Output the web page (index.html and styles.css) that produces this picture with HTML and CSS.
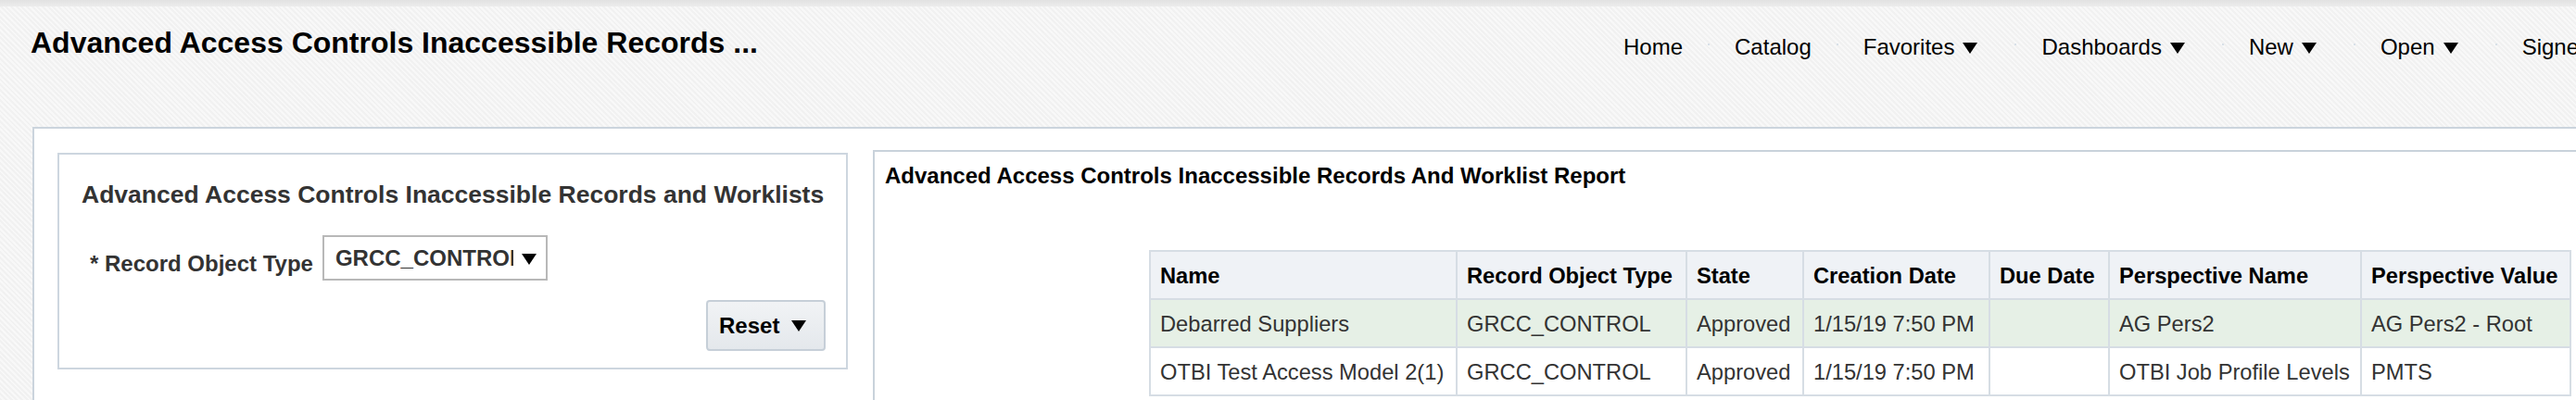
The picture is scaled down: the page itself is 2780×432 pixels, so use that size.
FILE: index.html
```html
<!DOCTYPE html>
<html lang="en">
<head>
  <meta charset="UTF-8" />
  <meta name="viewport" content="width=device-width, initial-scale=1.0" />
  <title>Advanced Access Controls Inaccessible Records</title>
  <link rel="stylesheet" href="styles.css">
</head>
<body>
  <div class="top-strip"></div>

  <header class="page-header">
    <h1 class="page-title">Advanced Access Controls Inaccessible Records ...</h1>
    <nav class="global-nav">
      <a class="nav-item">Home</a>
      <span class="nav-sep"></span>
      <a class="nav-item">Catalog</a>
      <span class="nav-sep"></span>
      <a class="nav-item has-menu">Favorites <svg class="caret" viewBox="0 0 16 12"><path d="M0 0H16L8 12Z"/></svg></a>
      <span class="nav-sep"></span>
      <a class="nav-item has-menu">Dashboards <svg class="caret" viewBox="0 0 16 12"><path d="M0 0H16L8 12Z"/></svg></a>
      <span class="nav-sep"></span>
      <a class="nav-item has-menu">New <svg class="caret" viewBox="0 0 16 12"><path d="M0 0H16L8 12Z"/></svg></a>
      <span class="nav-sep"></span>
      <a class="nav-item has-menu">Open <svg class="caret" viewBox="0 0 16 12"><path d="M0 0H16L8 12Z"/></svg></a>
      <span class="nav-sep"></span>
      <a class="nav-item">Signed In As grcuser</a>
    </nav>
  </header>

  <main class="dashboard">
    <div class="dashboard-panel">

      <section class="prompt-box">
        <h2 class="prompt-title">Advanced Access Controls Inaccessible Records and Worklists</h2>
        <div class="prompt-row">
          <label class="prompt-label">* Record Object Type</label>
          <div class="select-box">
            <span class="select-value">GRCC_CONTROL</span>
            <svg class="caret" viewBox="0 0 16 12"><path d="M0 0H16L8 12Z"/></svg>
          </div>
        </div>
        <div class="prompt-actions">
          <button class="reset-button">Reset <svg class="caret" viewBox="0 0 16 12"><path d="M0 0H16L8 12Z"/></svg></button>
        </div>
      </section>

      <section class="report">
        <h3 class="report-title">Advanced Access Controls Inaccessible Records And Worklist Report</h3>
        <table class="report-table">
          <colgroup>
            <col class="col-name">
            <col class="col-type">
            <col class="col-state">
            <col class="col-created">
            <col class="col-due">
            <col class="col-pname">
            <col class="col-pvalue">
          </colgroup>
          <thead>
            <tr>
              <th>Name</th>
              <th>Record Object Type</th>
              <th>State</th>
              <th>Creation Date</th>
              <th>Due Date</th>
              <th>Perspective Name</th>
              <th>Perspective Value</th>
            </tr>
          </thead>
          <tbody>
            <tr class="highlight">
              <td>Debarred Suppliers</td>
              <td>GRCC_CONTROL</td>
              <td>Approved</td>
              <td>1/15/19 7:50 PM</td>
              <td></td>
              <td>AG Pers2</td>
              <td>AG Pers2 - Root</td>
            </tr>
            <tr>
              <td>OTBI Test Access Model 2(1)</td>
              <td>GRCC_CONTROL</td>
              <td>Approved</td>
              <td>1/15/19 7:50 PM</td>
              <td></td>
              <td>OTBI Job Profile Levels</td>
              <td>PMTS</td>
            </tr>
          </tbody>
        </table>
      </section>

    </div>
  </main>
</body>
</html>
```

FILE: styles.css
```css
body {
  margin: 0;
  height: 432px;
  overflow: hidden;
  font-family: "Liberation Sans", Arial, sans-serif;
  color: #000;
  background-color: #f4f4f4;
  background-image: repeating-linear-gradient(45deg, #f1f1f1 0 2px, #f8f8f8 2px 4px);
}

.top-strip {
  height: 7px;
  background: linear-gradient(#e2e2e2, #ececec);
}

.page-header {
  display: grid;
  grid-template-columns: 1719px auto;
  align-items: start;
  height: 130px;
  padding-left: 33px;
  white-space: nowrap;
}

.page-title {
  margin: 21px 0 0;
  font-size: 32px;
  line-height: 36px;
  font-weight: bold;
}

.global-nav {
  display: flex;
  align-items: center;
  gap: 27px;
  margin-top: 30px;
  font-size: 24px;
  line-height: 28px;
}

.nav-item {
  display: flex;
  align-items: center;
  color: #000;
}

.nav-item.has-menu {
  padding-right: 13px;
}

.nav-sep {
  width: 2px;
  height: 2px;
  margin-top: -6px;
  background: #d8e0e8;
}

.caret {
  width: 16px;
  height: 12px;
  fill: #000;
}

.nav-item .caret {
  margin-left: 9px;
  margin-top: 2px;
}

.dashboard {
  margin-left: 35px;
}

.dashboard-panel {
  display: flex;
  align-items: flex-start;
  gap: 27px;
  height: 295px;
  box-sizing: border-box;
  padding: 23px 0 0 25px;
  background: #fff;
  border-top: 2px solid #cbd4dd;
  border-left: 2px solid #cbd4dd;
}

/* prompt box on the left */
.prompt-box {
  flex: 0 0 853px;
  box-sizing: border-box;
  margin-top: 3px;
  padding: 28px 22px 18px 24px;
  border: 2px solid #cdd6df;
  color: #333;
}

.prompt-title {
  margin: 0;
  font-size: 26.5px;
  line-height: 30px;
  font-weight: bold;
  white-space: nowrap;
}

.prompt-row {
  display: flex;
  align-items: flex-end;
  gap: 10px;
  margin-top: 29px;
  padding-left: 9px;
}

.prompt-label {
  margin-bottom: 4px;
  font-size: 24px;
  line-height: 28px;
  font-weight: bold;
}

.select-box {
  display: flex;
  align-items: center;
  width: 243px;
  height: 49px;
  box-sizing: border-box;
  padding-left: 12px;
  border: 2px solid #b8b8b8;
  background: #fff;
}

.select-value {
  width: 192px;
  overflow: hidden;
  white-space: nowrap;
  font-size: 24px;
  line-height: 28px;
  font-weight: bold;
  color: #333;
}

.select-box .caret {
  margin-left: 9px;
  margin-top: 2px;
}

.prompt-actions {
  display: flex;
  justify-content: flex-end;
  margin-top: 21px;
}

.reset-button {
  display: flex;
  align-items: center;
  gap: 13px;
  width: 129px;
  height: 55px;
  padding: 0 0 0 12px;
  box-sizing: border-box;
  border: 2px solid #c6cfd8;
  border-radius: 4px;
  background: linear-gradient(#f1f3f5, #e4e8ec);
  font-family: inherit;
  font-size: 24px;
  font-weight: bold;
  color: #000;
}

/* report on the right */
.report {
  flex: 1;
  align-self: stretch;
  min-width: 0;
  padding: 12px 0 0 11px;
  background: #fff;
  border-top: 2px solid #c9d2db;
  border-left: 2px solid #c9d2db;
}

.report-title {
  margin: 0;
  font-size: 24px;
  line-height: 28px;
  font-weight: bold;
  white-space: nowrap;
}

.report-table {
  margin: 66px 0 0 285px;
  width: 1533px;
  table-layout: fixed;
  border-collapse: collapse;
  font-size: 23.7px;
  line-height: 28px;
  white-space: nowrap;
}

.col-name { width: 331px; }
.col-type { width: 248px; }
.col-state { width: 126px; }
.col-created { width: 201px; }
.col-due { width: 129px; }
.col-pname { width: 272px; }
.col-pvalue { width: 226px; }

.report-table th,
.report-table td {
  height: 52px;
  box-sizing: border-box;
  padding: 12px 10px 10px 10px;
  border: 2px solid #d6dde4;
  text-align: left;
  overflow: hidden;
}

.report-table th {
  background: #eff2f6;
  font-weight: bold;
  color: #000;
}

.report-table td {
  color: #333;
}

.report-table tr.highlight td {
  background: #e6f0e6;
}
```
